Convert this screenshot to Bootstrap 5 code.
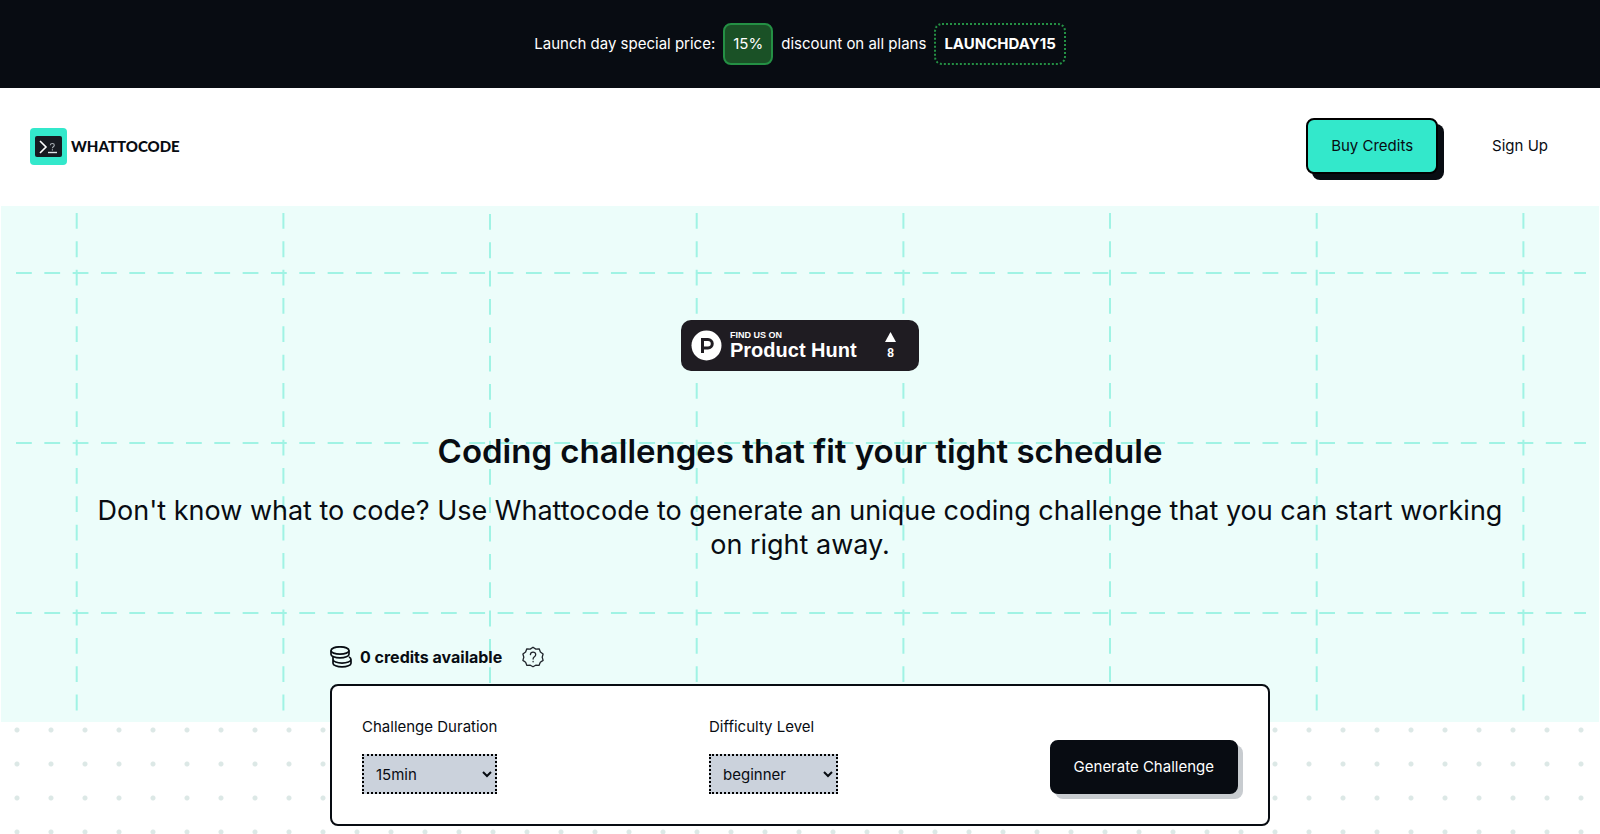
<!DOCTYPE html>
<html lang="en">
<head>
<meta charset="utf-8">
<meta name="viewport" content="width=device-width, initial-scale=1">
<title>Whattocode</title>
<link rel="stylesheet" href="https://cdn.jsdelivr.net/npm/bootstrap@5.3.0/dist/css/bootstrap.min.css">
<script defer src="https://cdn.jsdelivr.net/npm/bootstrap@5.3.0/dist/js/bootstrap.bundle.min.js"></script>
<style>
:root { --ink: #080c12; --mint: #33e8cb; }
body { font-family: Inter, "Liberation Sans", sans-serif; font-size: 15px; line-height: 22px; color: var(--ink); background: #fff; }
.promo { background: var(--ink); padding: 23px 16px; }
.promo-tag { border: 2px solid #249044; border-radius: 8px; padding: 8px; }
.promo-percent { background: #1a5126; }
.promo-code { border-style: dotted; font-weight: 700; }
.topnav { padding: 30px 30px 32px; }
.wordmark { font-family: Lato, sans-serif; font-weight: 900; font-size: 15px; color: var(--ink); }
.solid-btn { font-size: 15px; line-height: 22px; border: 2px solid var(--ink); border-radius: 8px; }
.buy-btn, .buy-btn:hover { background: var(--mint); border-color: #000; color: var(--ink); padding: 15px 23px; box-shadow: 6px 6px 0 var(--ink); }
.go-btn, .go-btn:hover { background: var(--ink); color: #fff; padding: 14px 22px; border-color: var(--ink); box-shadow: 5px 5px 0 #c8ccd0; }
.signup { color: var(--ink); padding: 17px 22px; margin-left: 32px; }
.hero { background: #ecfdfa; margin: 0 1px; padding: 114px 88px 160px; }
.hero h1 { font-size: 33px; line-height: 44px; font-weight: 600; margin: 58px 0 21px; }
.hero p { font-size: 27px; line-height: 34px; }
.ph-badge { background: #1f1c22; color: #fff; border-radius: 10px; width: 238px; height: 51px; padding: 0 23px 0 10px; font-family: "Liberation Sans", sans-serif; font-weight: 700; }
.ph-small { font-size: 9px; line-height: 9px; }
.ph-name { font-size: 20px; line-height: 20px; }
.ph-votes { font-size: 12px; line-height: 14px; }
.dots { background: radial-gradient(circle, #dce8e6 2px, transparent 3px) 0 -9px / 34px 34px; }
.planner { max-width: 940px; margin: -76px auto 0; padding-bottom: 8px; }
.credits { font-size: 16px; font-weight: 700; }
.panel { background: #fff; border: 2px solid var(--ink); border-radius: 8px; padding: 30px; margin-top: 16px; }
.pick { display: block; border: 2px dotted #000; background: #cbd2dc; color: var(--ink); height: 40px; padding: 0 8px; font-size: 15px; width: 100%; margin-top: 16px; }
</style>
</head>
<body class="d-flex flex-column min-vh-100">
<div class="promo text-white d-flex flex-wrap justify-content-center align-items-center gap-2">
  <span>Launch day special price:</span>
  <span class="promo-tag promo-percent">15%</span>
  <span>discount on all plans</span>
  <span class="promo-tag promo-code">LAUNCHDAY15</span>
</div>

<nav class="topnav d-flex align-items-center justify-content-between">
  <a href="#" class="d-flex align-items-center gap-1 text-decoration-none">
    <svg width="37" height="37" viewBox="0 0 37 37" aria-hidden="true">
      <rect width="37" height="37" rx="4" fill="#33e8cb"/>
      <rect x="5" y="8" width="27" height="21" rx="2" fill="#171a21"/>
      <path d="M10 13l6 6-6 6" fill="none" stroke="#fff" stroke-width="1.6"/>
      <path d="M18 24.5h9" stroke="#dfe5e8" stroke-width="1.4"/>
      <path d="M20.3 17.2c.2-2.200 4-2.200 4 0 0 1.600-1.900 1.500-1.900 3M22.400 21.300v1.200" fill="none" stroke="#aab0b6" stroke-width="1.1"/>
    </svg>
    <span class="wordmark">WHATTOCODE</span>
  </a>
  <div class="d-flex align-items-center">
    <button type="button" class="btn solid-btn buy-btn">Buy Credits</button>
    <a href="#" class="signup text-decoration-none">Sign Up</a>
  </div>
</nav>

<header class="hero position-relative text-center">
  <svg class="position-absolute top-0 start-0 w-100 h-100" viewBox="1 206 1598 516" preserveAspectRatio="xMidYMid slice" aria-hidden="true">
    <g fill="none" stroke="#a0f3e4" stroke-width="2">
      <path stroke-dasharray="15.8 12.53" d="M16 273H1586M16 443H1586M16 613H1586"/>
      <path stroke-dasharray="15.8 12.53" d="M76.700 213V711M283.400 213V711M490 214V711M696.700 213V711M903.400 213V711M1110 213V711M1316.700 213V711M1523.400 213V711"/>
    </g>
  </svg>
  <div class="position-relative">
    <a href="#" class="ph-badge d-inline-flex align-items-center text-decoration-none text-start align-top">
      <svg width="31" height="31" viewBox="0 0 31 31" aria-hidden="true">
        <circle cx="15.5" cy="15.5" r="15" fill="#fff"/>
        <path d="M11.500 23V9.500h5.500a4.200 4.200 0 0 1 0 8.500h-5.500" fill="none" stroke="#1f1c22" stroke-width="3"/>
      </svg>
      <span class="d-flex flex-column ms-2 flex-grow-1"><span class="ph-small">FIND US ON</span><span class="ph-name">Product Hunt</span></span>
      <span class="ph-votes d-flex flex-column align-items-center gap-1">
        <svg width="11" height="10" viewBox="0 0 11 10" aria-hidden="true"><path d="M5.500 0L11 10H0z" fill="#fff"/></svg>8
      </span>
    </a>
    <h1>Coding challenges that fit your tight schedule</h1>
    <p class="mb-0">Don't know what to code? Use Whattocode to generate an unique coding challenge that you can start working on right away.</p>
  </div>
</header>

<main class="dots flex-grow-1">
  <form class="planner position-relative">
    <div class="credits d-flex align-items-center">
      <svg width="22" height="22" viewBox="0 0 22 22" fill="none" stroke="#080c12" stroke-width="1.7" aria-hidden="true">
        <ellipse cx="10" cy="4.5" rx="9" ry="3.7"/>
        <path d="M1 4.500v3.700c0 2 4 3.700 9 3.700s9-1.700 9-3.700V4.500"/>
        <path d="M3 10.500v3c0 2 4 3.600 9 3.600s9-1.600 9-3.600c0-1-.7-1.900-2-2.500M3 13.500v3.700c0 2 4 3.700 9 3.700s9-1.700 9-3.700v-3.700"/>
      </svg>
      <span class="ms-2">0 credits available</span>
      <svg class="ms-3" width="30" height="22" viewBox="-4 0 30 22" fill="none" stroke="#20252b" stroke-width="1.3" stroke-linejoin="round" stroke-linecap="round" aria-label="Help" role="img">
        <path d="M11 1.200l2.800 1.900 3.400-.3 1.200 3.200 2.700 2-.9 3.200.9 3.200-2.800 1.900-1.300 3.100-3.300-.2L11 20.800l-2.700-1.600-3.400.2-1.300-3.100L.9 14.400l.9-3.200L.9 8l2.700-2 1.200-3.200 3.400.3z"/>
        <path d="M8.400 8.600c.2-3.400 5.400-3.200 5.300.1 0 2.200-2.600 2-2.600 4.300M11.100 15.500v.3"/>
      </svg>
    </div>
    <div class="panel d-flex flex-wrap justify-content-between align-items-end gap-3">
      <div><label for="duration">Challenge Duration</label>
        <select id="duration" class="pick"><option>15min</option><option>30min</option><option>60min</option></select></div>
      <div><label for="level">Difficulty Level</label>
        <select id="level" class="pick"><option>beginner</option><option>intermediate</option><option>advanced</option></select></div>
      <button type="button" class="btn solid-btn go-btn">Generate Challenge</button>
    </div>
  </form>
</main>
</body>
</html>
